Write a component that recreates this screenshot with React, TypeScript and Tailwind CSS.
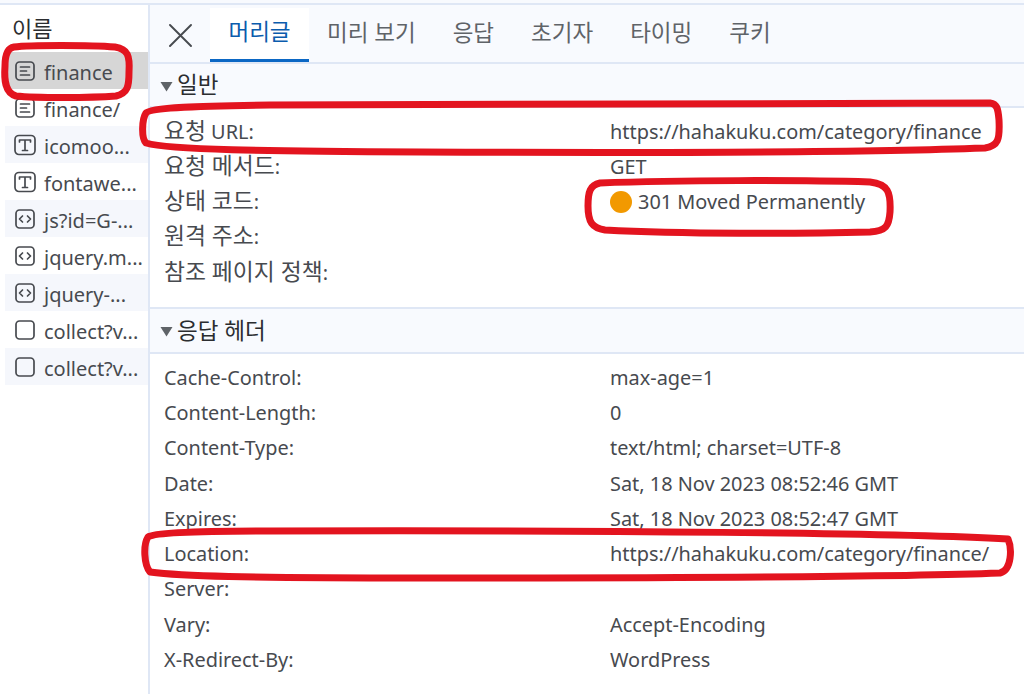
const FONT = "font-['Noto_Sans','Noto_Sans_CJK_KR',sans-serif]";

type IconKind = "doc" | "font" | "script" | "blank";

function FileIcon({ kind }: { kind: IconKind }) {
  return (
    <svg width="22" height="22" viewBox="0 0 22 22" fill="none" stroke="#474a4f" strokeWidth="1.7" strokeLinecap="round" strokeLinejoin="round" className="mt-[1px] shrink-0">
      {kind === "font" ? <rect x="1" y="1.500" width="20" height="19" rx="4" /> : <rect x="2" y="2" width="18" height="18" rx="3.500" />}
      {kind === "doc" && <path d="M6.500 7h9M6.500 11h6M6.500 15h9" />}
      {kind === "font" && <path d="M5.500 8V6h11v2M11 6v10.500M8.500 16.500h5" />}
      {kind === "script" && <path d="M8.500 8l-3 3 3 3M13.500 8l3 3-3 3" />}
    </svg>
  );
}

const files: { name: string; kind: IconKind; bg: string }[] = [
  { name: "finance", kind: "doc", bg: "bg-[#d6d6d6]" },
  { name: "finance/", kind: "doc", bg: "bg-white" },
  { name: "icomoo...", kind: "font", bg: "bg-[#f5f7fc]" },
  { name: "fontawe...", kind: "font", bg: "bg-white" },
  { name: "js?id=G-...", kind: "script", bg: "bg-[#f5f7fc]" },
  { name: "jquery.m...", kind: "script", bg: "bg-white" },
  { name: "jquery-...", kind: "script", bg: "bg-[#f5f7fc]" },
  { name: "collect?v...", kind: "blank", bg: "bg-white" },
  { name: "collect?v...", kind: "blank", bg: "bg-[#f5f7fc]" },
];

const tabs = ["미리 보기", "응답", "초기자", "타이밍", "쿠키"];

const headers = [
  ["Cache-Control:", "max-age=1"],
  ["Content-Length:", "0"],
  ["Content-Type:", "text/html; charset=UTF-8"],
  ["Date:", "Sat, 18 Nov 2023 08:52:46 GMT"],
  ["Expires:", "Sat, 18 Nov 2023 08:52:47 GMT"],
  ["Location:", "https://hahakuku.com/category/finance/"],
  ["Server:", ""],
  ["Vary:", "Accept-Encoding"],
  ["X-Redirect-By:", "WordPress"],
];

function Row({ label, children }: { label: React.ReactNode; children?: React.ReactNode }) {
  return (
    <div className="flex h-[35.25px] items-center pl-[14px] text-[19.9px] text-[#474a4f]">
      <div className="w-[446px] shrink-0 whitespace-nowrap">{label}</div>
      <div className="flex items-center whitespace-nowrap">{children}</div>
    </div>
  );
}

function Ko({ children }: { children: React.ReactNode }) {
  return <span className="text-[22.8px] leading-[28px]">{children}</span>;
}

function SectionHeader({ title, height }: { title: string; height: string }) {
  return (
    <div className={`flex items-center gap-[4px] border-y-2 border-[#dfe7f5] bg-[#f8fafe] pl-[10px] text-[22.5px] text-[#2b2d30] ${height}`}>
      <svg width="13" height="11" viewBox="0 0 13 11" className="mt-[2px] shrink-0">
        <path d="M0.500 1h12L6.500 10.500z" fill="#5f6368" />
      </svg>
      <span>{title}</span>
    </div>
  );
}

export default function App() {
  return (
    <div className={`relative h-[694px] w-[1024px] overflow-hidden bg-white ${FONT}`}>
      <div className="flex h-full flex-col">
        <div className="h-[5px] shrink-0 border-b-2 border-[#dfe7f5] bg-[#f8fafe]" />
        <div className="flex min-h-0 flex-1">
          <div className="w-[150px] shrink-0 border-r-2 border-[#dfe7f5] pl-[5px]">
            <div className="flex h-[47px] items-center pl-[7px] text-[22px] text-[#2b2d30]">이름</div>
            {files.map((f, i) => (
              <div key={i} className={`flex h-[37px] items-center gap-[8px] pl-[9px] text-[20px] text-[#474a4f] ${f.bg}`}>
                <FileIcon kind={f.kind} />
                <span className="mt-[5px] whitespace-nowrap">{f.name}</span>
              </div>
            ))}
          </div>
          <div className="min-w-0 flex-1">
            <div className="flex h-[57px] items-end bg-[#f8fafe] pt-[3px]">
              <div className="flex h-[54px] w-[60px] items-center justify-center">
                <svg width="24" height="24" viewBox="0 0 24 24" fill="none" stroke="#474a4f" strokeWidth="1.900" strokeLinecap="round">
                  <path d="M2 2l21 21M23 2L2 23" />
                </svg>
              </div>
              <div className="flex h-[54px] w-[99px] items-center justify-center border-b-[3px] border-[#0b67c4] bg-white pb-[4px] text-[22.500px] text-[#0b5cad]">머리글</div>
              <div className="flex h-[54px] items-center gap-[37px] pb-[4px] pl-[18px] text-[22.500px] text-[#5f6368]">
                {tabs.map((t) => (
                  <span key={t} className="whitespace-nowrap">{t}</span>
                ))}
              </div>
            </div>
            <SectionHeader title="일반" height="h-[46px]" />
            <div className="pt-[6px]">
              <Row label={<><Ko>요청</Ko> URL:</>}>https://hahakuku.com/category/finance</Row>
              <Row label={<><Ko>요청 메서드</Ko>:</>}>GET</Row>
              <Row label={<><Ko>상태 코드</Ko>:</>}>
                <span className="mr-[6px] h-[22px] w-[22px] rounded-full bg-[#f29900]" />
                301 Moved Permanently
              </Row>
              <Row label={<><Ko>원격 주소</Ko>:</>} />
              <Row label={<><Ko>참조 페이지 정책</Ko>:</>} />
            </div>
            <div className="mt-[17px]">
              <SectionHeader title="응답 헤더" height="h-[47px]" />
            </div>
            <div className="pt-[6px]">
              {headers.map(([k, v]) => (
                <Row key={k} label={k}>{v}</Row>
              ))}
            </div>
          </div>
        </div>
      </div>

      {/* red pen marks from the annotated screenshot */}
      <svg className="pointer-events-none absolute left-0 top-0" width="1024" height="694" viewBox="0 0 1024 694" fill="none" stroke="#e3141f" strokeWidth="7" strokeLinejoin="round" strokeLinecap="round">
        <path d="M14 47C30 45 90 45 115 47C128 49 130 56 129 72C129 86 128 93 116 96C90 98 35 98 16 96C5 93 4 80 5 66C5 54 8 48 14 47Z" />
        <path d="M270 105C200 106 150 107 146 113C142 119 141 138 146 143C170 150 260 151 420 152C640 153 880 152 985 148C998 146 1000 140 999 120C998 108 997 104 990 103C900 103 600 104 270 105Z" />
        <path d="M600 183C680 180 800 180 870 182C888 184 891 192 890 212C889 226 886 231 870 232C800 234 680 234 605 230C592 228 588 222 588 206C588 192 590 185 600 183Z" />
        <path d="M270 531C210 531 155 532 148 537C143 545 144 565 150 572C180 576 240 578 420 578C640 578 900 577 1000 573C1012 570 1012 548 1008 539C900 533 600 530 270 531Z" />
      </svg>
    </div>
  );
}
